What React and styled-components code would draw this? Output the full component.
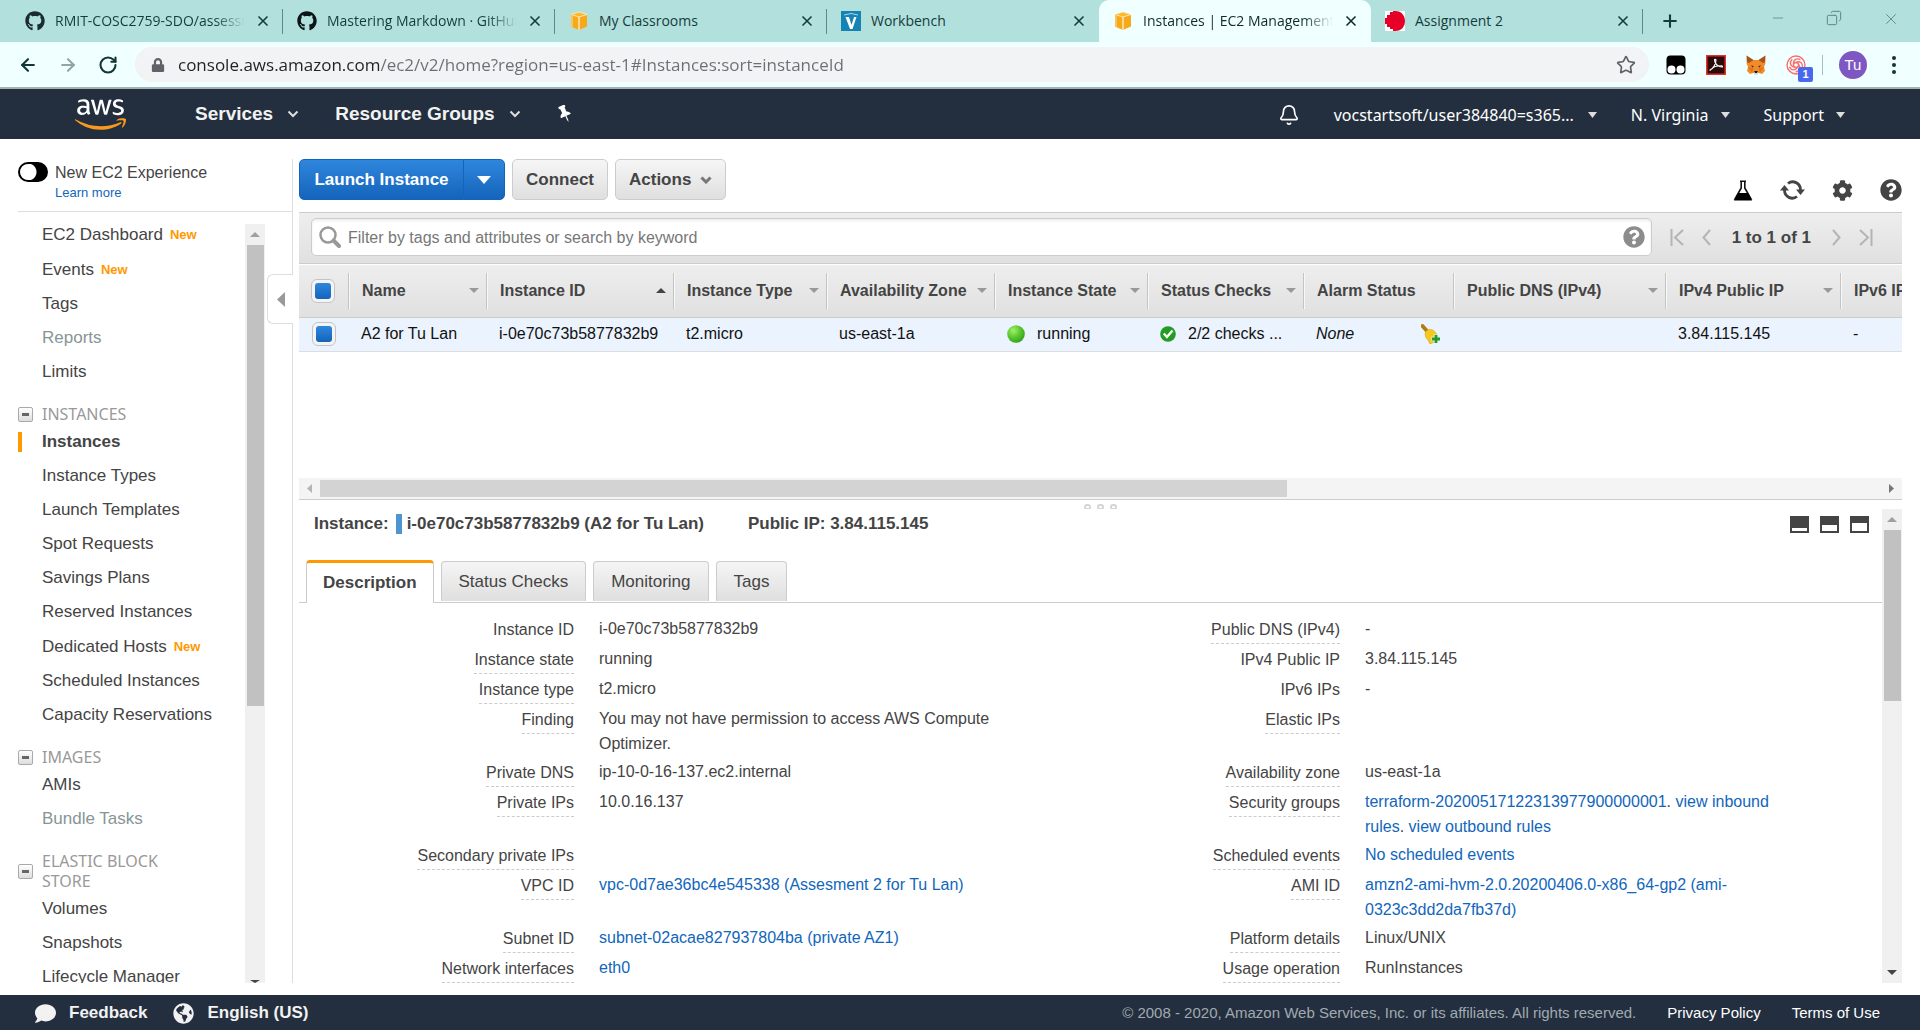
import React, { useState } from "react";
import styled, { createGlobalStyle, css } from "styled-components";
import { FaGithub, FaAws, FaLock, FaQuestionCircle, FaCog, FaComment, FaGlobeAmericas } from "react-icons/fa";
import { X, Plus, Minus, Copy, ArrowLeft, ArrowRight, RotateCw, Star, Bell } from "lucide-react";

const sans = '"Liberation Sans", Arial, sans-serif';
const humanist = '"Noto Sans", Tahoma, sans-serif';
const chromeFont = '"Open Sans", "Segoe UI", sans-serif';

const c = {
  strip: "#b2e0dd",
  bar: "#f0ffff",
  navy: "#232f3e",
  text: "#444444",
  link: "#1166bb",
  muted: "#879596",
  orange: "#ff9900",
  line: "#cccccc",
  pale: "#dddddd",
};

const Global = createGlobalStyle`
  * { box-sizing: border-box; }
  body { margin: 0; background: #fff; color: ${c.text}; font: 16px/20px ${sans}; }
  button { font: inherit; color: inherit; background: none; border: 0; padding: 0; cursor: pointer; }
  a { color: ${c.link}; text-decoration: none; }
  svg { display: block; flex: none; }
`;

const Page = styled.div`
  height: 100vh;
  display: flex;
  flex-direction: column;
  overflow: hidden;
`;

/* Browser frame */
const TabStrip = styled.div`
  display: flex;
  flex: none;
  height: 42px;
  padding-left: 11px;
  background: ${c.strip};
  font: 14px/20px ${chromeFont};
  color: #143c3c;
`;
const BrowserTab = styled.div`
  display: flex;
  align-items: center;
  flex: 0 1 272px;
  min-width: 0;
  padding: 0 12px 0 14px;
  gap: 10px;
  border-radius: ${(p) => (p.$active ? "10px 10px 0 0" : "0")};
  background: ${(p) => (p.$active ? c.bar : "transparent")};
  color: ${(p) => (p.$active ? "#102a2a" : "inherit")};
`;
const TabTitle = styled.button`
  flex: 1;
  min-width: 0;
  overflow: hidden;
  white-space: nowrap;
  text-align: left;
  ${(p) => p.$fade && css`mask-image: linear-gradient(to right, #000 calc(100% - 30px), transparent);`}
`;
const TabDivider = styled.span`
  width: 1px;
  height: 25px;
  margin-top: 9px;
  margin-left: -1px;
  background: #5c8a88;
`;
const NewTab = styled.button`
  width: 54px;
  display: grid;
  place-items: center;
`;
const WindowButtons = styled.div`
  display: flex;
  gap: 40px;
  margin-left: auto;
  padding: 10px 20px 0 0;
  color: #5f8583;
`;
const AddressBar = styled.div`
  display: flex;
  align-items: center;
  flex: none;
  height: 47px;
  padding: 0 19px 0 18px;
  gap: 20px;
  background: ${c.bar};
  border-bottom: 2px solid #a3b3b3;
  color: #123636;
`;
const Omnibox = styled.label`
  display: flex;
  align-items: center;
  flex: 1;
  height: 35px;
  margin: 0 -3px;
  padding: 0 13px 0 16px;
  gap: 13px;
  border-radius: 18px;
  background: #f1f3f4;
  color: #5f6368;
`;
const UrlInput = styled.input`
  flex: 1;
  min-width: 0;
  padding: 0;
  border: 0;
  outline: 0;
  font: 17px/24px ${chromeFont};
  color: #6b6f73;
  background: linear-gradient(to right, #202124 202px, #6b6f73 202px);
  background-clip: text;
  -webkit-text-fill-color: transparent;
`;
const Extensions = styled.div`
  display: flex;
  align-items: center;
  gap: 20px;
`;
const ExtensionButton = styled.button`
  position: relative;
`;
const ExtBadge = styled.span`
  position: absolute;
  left: 12px;
  top: 12px;
  width: 15px;
  height: 15px;
  border-radius: 2px;
  background: #4a68ee;
  color: #fff;
  font: bold 11px/15px ${sans};
`;
const ToolbarRule = styled.span`
  width: 1px;
  height: 20px;
  margin: 0 -4px;
  background: #a9bcbc;
`;
const Avatar = styled.button`
  width: 28px;
  height: 28px;
  border-radius: 50%;
  background: #7e57c2;
  color: #fff;
  font: 15px/28px ${sans};
`;

/* AWS navigation */
const Nav = styled.header`
  display: flex;
  align-items: center;
  flex: none;
  height: 50px;
  padding: 0 75px;
  background: ${c.navy};
  color: #fff;
`;
const AwsLogo = styled(FaAws)`
  width: 51px;
  height: 41px;
  fill: url(#aws-fill);
`;
const NavMain = styled.div`
  display: flex;
  align-items: center;
  gap: 36px;
  margin-left: 69px;
  font: bold 19px/24px ${sans};
  color: #f2f2f2;
`;
const NavSide = styled.div`
  display: flex;
  align-items: center;
  gap: 34px;
  margin-left: auto;
  padding-top: 2px;
  font: 16px/20px ${humanist};
`;
const NavButton = styled.button`
  display: flex;
  align-items: center;
  gap: ${(p) => p.$gap || 14}px;
  white-space: nowrap;
`;

/* Content */
const Body = styled.div`
  display: flex;
  flex: 1;
  min-height: 0;
  gap: 6px;
  padding: 20px 18px 12px 0;
`;
const Sidebar = styled.aside`
  position: relative;
  display: flex;
  flex-direction: column;
  flex: 0 0 293px;
  border-right: 1px solid ${c.pale};
`;
const Experience = styled.div`
  display: flex;
  flex: none;
  height: 53px;
  margin-left: 18px;
  padding-top: 3px;
  gap: 7px;
  border-bottom: 1px solid ${c.pale};
`;
const Toggle = styled.input`
  appearance: none;
  flex: none;
  width: 30px;
  height: 20px;
  margin: 0;
  border-radius: 10px;
  border: 2px solid #000;
  background: radial-gradient(circle at 8px 8px, #fff 8px, #000 9px);
`;
const ExperienceText = styled.div`
  display: flex;
  flex-direction: column;
  padding-top: 1px;
  font-size: 16px;
  a { font-size: 13px; line-height: 20px; }
`;
const SideScroll = styled.div`
  display: flex;
  flex: 1;
  min-height: 0;
`;
const SideNav = styled.nav`
  flex: 1;
  min-width: 0;
  padding: 5px 0 0 18px;
  overflow: hidden;
`;
const GroupTitle = styled.h3`
  display: flex;
  align-items: center;
  gap: 9px;
  max-width: 170px;
  margin: 15px 0 1px;
  font: 16px/20px ${humanist};
  color: #999;
`;
const CollapseButton = styled.button`
  display: grid;
  place-items: center;
  flex: none;
  width: 15px;
  height: 15px;
  border: 1px solid #aaa;
  border-radius: 2px;
  background: linear-gradient(#fff, #ddd);
  &::after { content: ""; width: 7px; height: 3px; background: #666; }
`;
const List = styled.ul`
  list-style: none;
  margin: 0;
  padding: 0;
`;
const SideItem = styled.li`
  display: flex;
  align-items: center;
  height: ${(p) => (p.$isNew ? 35 : 34)}px;
  font-size: 17px;
  a {
    padding-left: ${(p) => (p.$active ? 20 : 24)}px;
    border-left: ${(p) => (p.$active ? `4px solid ${c.orange}` : "0")};
    color: ${(p) => (p.$muted ? c.muted : c.text)};
    font-weight: ${(p) => (p.$active ? "bold" : "normal")};
  }
`;
const NewBadge = styled.span`
  margin-left: 7px;
  font: bold 13px/20px ${sans};
  color: ${c.orange};
`;
const SideHandle = styled.button`
  position: absolute;
  right: -1px;
  top: 115px;
  width: 26px;
  height: 50px;
  display: grid;
  place-items: center;
  border: 1px solid ${c.pale};
  border-right: 0;
  border-radius: 6px 0 0 6px;
  background: #fff;
`;

/* Scroll bars */
const Bar = styled.div`
  display: flex;
  flex-direction: ${(p) => (p.$horizontal ? "row" : "column")};
  align-items: center;
  justify-content: space-between;
  flex: none;
  ${(p) => (p.$horizontal ? "height: 21px;" : "width: 20px;")}
  margin: ${(p) => p.$margin || "0"};
  background: ${(p) => (p.$horizontal ? "#f4f4f4" : "#f0f0f0")};
`;
const BarEnd = styled.span`
  display: grid;
  place-items: center;
  flex: none;
  width: 21px;
  height: 21px;
`;
const Thumb = styled.span`
  flex: 0 0 auto;
  ${(p) => (p.$horizontal ? css`height: 17px; width: ${p.$size};` : css`width: 17px; height: ${p.$size};`)}
  background: ${(p) => (p.$horizontal ? "#d3d3d3" : "#c1c1c1")};
  margin-${(p) => (p.$horizontal ? "right" : "bottom")}: auto;
`;

const Main = styled.main`
  display: flex;
  flex-direction: column;
  flex: 1;
  min-width: 0;
`;
const Actions = styled.div`
  display: flex;
  flex: none;
  gap: 7px;
  height: 53px;
`;
const plainButton = css`
  border: 1px solid ${c.line};
  background: linear-gradient(#f6f6f6, #dfdfdf);
  color: ${c.text};
`;
const Button = styled.button`
  display: flex;
  align-items: center;
  height: 41px;
  gap: 9px;
  padding: 0 13px;
  border-radius: 5px;
  font: bold 17px/20px ${sans};
  ${plainButton}
`;
const Split = styled.div`
  display: flex;
  height: 41px;
`;
const Primary = styled(Button)`
  justify-content: center;
  padding: 0;
  min-width: ${(p) => (p.$arrow ? 42 : 165)}px;
  border: 1px solid #1166bb;
  border-radius: ${(p) => (p.$arrow ? "0 5px 5px 0" : "5px 0 0 5px")};
  margin-left: ${(p) => (p.$arrow ? -1 : 0)}px;
  background: linear-gradient(#2f86dd, #1464ba);
  color: #fff;
`;
const IconRow = styled.div`
  display: flex;
  align-items: center;
  gap: 27px;
  height: 22px;
  margin: 20px 0 0 auto;
  color: ${c.text};
`;
const FilterBar = styled.div`
  display: flex;
  align-items: center;
  flex: none;
  height: 52px;
  padding: 0 29px 2px 12px;
  gap: 18px;
  border: solid ${c.line};
  border-width: 1px 0;
  background: linear-gradient(#eeeeee, #e0e0e0);
`;
const FilterBox = styled.label`
  display: flex;
  align-items: center;
  flex: 1;
  height: 38px;
  padding: 0 6px 0 7px;
  gap: 7px;
  border: 1px solid ${c.line};
  border-radius: 5px;
  background: #fff;
  box-shadow: inset 0 2px 3px #eee;
  color: #999;
`;
const FilterInput = styled.input`
  flex: 1;
  min-width: 0;
  padding: 2px 0 0;
  border: 0;
  outline: 0;
  background: none;
  font: 16px/24px ${sans};
  color: ${c.text};
  &::placeholder { color: #777; opacity: 1; }
`;
const Pager = styled.div`
  display: flex;
  align-items: center;
  gap: 18px;
  font: bold 17px/20px ${sans};
  span { padding: 1px 3px 0; }
`;
const TablePane = styled.section`
  display: flex;
  flex-direction: column;
  flex: none;
  height: 236px;
  padding-top: 1px;
  border-bottom: 1px solid ${c.line};
`;
const TableClip = styled.div`
  flex: 1;
  min-height: 0;
  overflow: hidden;
`;
const Table = styled.table`
  width: 2600px;
  table-layout: fixed;
  border-collapse: collapse;
  white-space: nowrap;
`;
const HeadCell = styled.th`
  height: 52px;
  padding: 0;
  text-align: left;
  font: bold 16px/20px ${sans};
  border-bottom: 1px solid ${c.line};
  background: linear-gradient(#eeeeee, #e0e0e0);
`;
const HeadInner = styled.div`
  display: flex;
  align-items: center;
  justify-content: space-between;
  height: 36px;
  padding: 0 7px 0 ${(p) => (p.$plain ? 12 : 13)}px;
  border-left: ${(p) => (p.$plain ? "0" : "1px solid #c4c4c4")};
  box-shadow: ${(p) => (p.$plain ? "none" : "inset 1px 0 #f8f8f8")};
`;
const Cell = styled.td`
  height: 34px;
  padding: 0 6px 0 13px;
  color: #111;
  background: #eaf3fe;
  border-bottom: 1px solid ${c.pale};
  font-style: ${(p) => (p.$italic ? "italic" : "normal")};
`;
const CellFlex = styled.span`
  display: flex;
  align-items: center;
  gap: 12px;
  justify-content: ${(p) => (p.$apart ? "space-between" : "flex-start")};
  padding-right: ${(p) => (p.$apart ? 6 : 0)}px;
`;
const Check = styled.input`
  appearance: none;
  display: block;
  width: 24px;
  height: 24px;
  margin: 0;
  padding: 3px;
  border: 1px solid #c4c4c4;
  border-radius: 6px;
  background: #f4f4f4;
  &:checked::before {
    content: "";
    display: block;
    height: 16px;
    border-radius: 3px;
    background: linear-gradient(#2f86dd, #1464ba);
  }
`;

/* Details */
const Splitter = styled.div`
  display: flex;
  align-items: flex-end;
  justify-content: center;
  flex: none;
  gap: 6px;
  height: 9px;
`;
const Dot = styled.span`
  width: 7px;
  height: 5px;
  border: 2px solid #d5d5d5;
  border-bottom-width: 1px;
  border-radius: 3px 3px 1px 1px;
`;
const DetailPane = styled.section`
  display: flex;
  flex: 1;
  min-height: 0;
`;
const DetailContent = styled.div`
  flex: 1;
  min-width: 0;
  overflow: hidden;
`;
const DetailTitle = styled.h2`
  display: flex;
  align-items: center;
  height: 30px;
  margin: 0;
  padding: 0 13px 0 15px;
  font: bold 17px/20px ${sans};
`;
const Marker = styled.span`
  width: 6px;
  height: 20px;
  margin: 0 5px 0 7px;
  background: #4f94d2;
`;
const PublicIp = styled.span`
  margin-left: 44px;
`;
const Layouts = styled.span`
  display: flex;
  gap: 11px;
  margin-left: auto;
`;
const LayoutButton = styled.button`
  width: 19px;
  height: 17px;
  padding: 2px;
  border: 0;
  display: flex;
  align-items: flex-end;
  background: #444;
  &::after { content: ""; width: 100%; height: ${(p) => p.$open}px; background: #fff; }
`;
const Tabs = styled.div`
  display: flex;
  align-items: flex-end;
  gap: 7px;
  margin-top: 21px;
  padding-left: 7px;
  border-bottom: 1px solid ${c.line};
`;
const DetailTab = styled.button`
  height: ${(p) => (p.$active ? 43 : 40)}px;
  padding: 0 ${(p) => (p.$active ? 16 : 17)}px;
  border: 1px solid ${c.line};
  border-bottom: 0;
  border-radius: 4px 4px 0 0;
  font: 17px/20px ${sans};
  background: linear-gradient(#f5f5f5, #dfdfdf);
  margin-bottom: 1px;
  ${(p) => p.$active && css`
    border-top: 3px solid ${c.orange};
    background: #fff;
    font-weight: bold;
    margin-bottom: -1px;
  `}
`;
const Facts = styled.dl`
  display: grid;
  grid-template-columns: 275fr 491fr 275fr 491fr;
  margin: 0;
  padding: 13px 51px 0 0;
`;
const Fact = styled.dt`
  display: flex;
  justify-content: flex-end;
  align-items: flex-start;
  height: 30px;
  span {
    line-height: 27px;
    white-space: nowrap;
    border-bottom: 1px dashed ${(p) => (p.$plain ? "transparent" : c.line)};
  }
`;
const Value = styled.dd`
  margin: 0;
  padding: 0 36px 3px 25px;
  line-height: 25px;
`;

/* Footer */
const Footer = styled.footer`
  display: flex;
  align-items: center;
  flex: none;
  height: 35px;
  padding: 1px 40px 0 35px;
  background: ${c.navy};
  color: #fff;
`;
const FooterButton = styled.button`
  display: flex;
  align-items: center;
  gap: 13px;
  margin-right: 26px;
  font: bold 17px/20px ${sans};
  color: #f2f2f2;
`;
const Legal = styled.div`
  display: flex;
  gap: 31px;
  margin-left: auto;
  font-size: 15px;
  color: #a2a9b1;
  a { color: #fff; }
`;

/* Drawings */
const Tri = ({ dir = "down", w = 9, h = 6, fill = "#999" }) => {
  const pts = {
    down: "0,0 10,0 5,10",
    up: "0,10 10,10 5,0",
    left: "10,0 10,10 0,5",
    right: "0,0 0,10 10,5",
  };
  return (
    <svg width={w} height={h} viewBox="0 0 10 10" preserveAspectRatio="none" aria-hidden="true">
      <polygon points={pts[dir]} fill={fill} />
    </svg>
  );
};
const Chevron = ({ stroke = "#ddd", width = 2 }) => (
  <svg width="12" height="8" viewBox="0 0 12 8" fill="none" stroke={stroke} strokeWidth={width} aria-hidden="true">
    <path d="M1.500 1.500 6 6 10.500 1.500" />
  </svg>
);
const Cube = () => (
  <svg width="20" height="20" viewBox="0 0 20 20" aria-hidden="true">
    <path d="M10 1 18 3.500v12L10 19 2 15.500v-12z" fill="#f7a81b" />
    <path d="M10 1 18 3.500 10 6 2 3.500z" fill="#fbb829" stroke="#fff3cf" strokeWidth=".8" />
    <path d="M10 6v13" stroke="#ffe9b5" strokeWidth="1.500" />
    <path d="M2 3.500v12L4 16.500V4z" fill="#f9c45c" />
  </svg>
);
const Vocareum = () => (
  <svg width="20" height="20" viewBox="0 0 20 20" aria-hidden="true">
    <rect width="20" height="20" fill="#1583b5" />
    <path d="M3 4 10 2.500 17 4" fill="none" stroke="#a8d5e8" />
    <path d="M4.500 6H8l2.500 8L13 6h2.500L11.500 18h-2.500z" fill="#fff" />
  </svg>
);
const Rmit = () => (
  <svg width="20" height="20" viewBox="0 0 20 20" aria-hidden="true">
    <rect width="20" height="20" fill="#fff" />
    <path d="M10 0c7 0 10 5 10 10s-3 10-10 10H8v-2H5v-2H2v-3H0V7h2V4h3V1h3V0z" fill="#e60028" />
  </svg>
);
const Tampermonkey = () => (
  <svg width="20" height="20" viewBox="0 0 20 20" aria-hidden="true">
    <rect x=".5" y=".5" width="19" height="19" rx="4" fill="#000" />
    <circle cx="5.500" cy="14.500" r="4" fill="#fff" />
    <circle cx="14.500" cy="14.500" r="4" fill="#fff" />
  </svg>
);
const Acrobat = () => (
  <svg width="20" height="20" viewBox="0 0 20 20" aria-hidden="true">
    <rect x=".75" y=".75" width="18.500" height="18.500" fill="#2c0b0b" stroke="#e5332a" strokeWidth="1.500" />
    <path d="M4 15c3-1 6-6 6-10 0-1-1.500-1-1.500 0 0 4 4 7 7.500 7 1 0 .5-1.200-.5-1.200C12 10.800 7 12 5 14.500c-.6.7-1 .8-1 .5z" fill="none" stroke="#fff" strokeWidth="1.100" />
  </svg>
);
const Fox = () => (
  <svg width="20" height="20" viewBox="0 0 20 20" aria-hidden="true">
    <path d="M1 1l6 4h6l6-4 .5 7L18 12l1 4-3 3-3-1H7l-3 1-3-3 1-4L.5 8z" fill="#f28b2a" />
    <path d="M.5 .5 7.500 5 3 8 1 7zM19.500 .5 12.500 5 17 8l2-1z" fill="#a8531d" />
    <path d="M2 12l5.500 1L6 18zM18 12l-5.500 1L14 18z" fill="#e2761b" />
    <path d="M5 10 8 11.500 6.500 12.500zM15 10 12 11.500l1.500 1z" fill="#333" />
    <path d="M8 17h4v2.500H8z" fill="#d9cfc8" />
    <path d="M8.200 16h3.600L11 18H9z" fill="#1a1a1a" />
  </svg>
);
const Swirl = () => (
  <svg width="20" height="20" viewBox="0 0 20 20" fill="none" stroke="#ff6b6b" strokeWidth="1.400" aria-hidden="true">
    <circle cx="10" cy="10" r="9" />
    {[0, 72, 144, 216, 288].map((a) => (
      <path key={a} transform={`rotate(${a} 10 10)`} d="M10 7.500C14 5.500 17 8 16.500 12.500" />
    ))}
    <circle cx="10" cy="10" r="2.500" />
  </svg>
);
const Flask = () => (
  <svg width="20" height="21" viewBox="0 0 20 21" aria-hidden="true">
    <path d="M7 1.200h6M8.200 1v7L2 19h16L11.800 8V1" fill="none" stroke="#111" strokeWidth="1.600" />
    <path d="M5 13h10l4 7.500H1z" fill="#000" />
  </svg>
);
const Refresh = () => (
  <svg width="25" height="22" viewBox="0 0 25 22" aria-hidden="true">
    <g fill="none" stroke="#444" strokeWidth="2.800">
      <path d="M8 4.500C13 .5 20.500 4 20.500 11" />
      <path d="M17 17.500C12 21.500 4.500 18 4.500 11" />
    </g>
    <path d="M16 10.500h9L20.500 16zM0 11.500h9L4.500 6z" fill="#444" />
  </svg>
);
const PageArrow = ({ flip, end }) => (
  <svg width={end ? 14 : 9} height="17" viewBox={end ? "0 0 14 17" : "0 0 9 17"} fill="none" stroke="#b4b4b4" strokeWidth="2" aria-hidden="true">
    {end && !flip && <path d="M1.500 0v17M13 1 5 8.500 13 16" />}
    {end && flip && <path d="M12.500 0v17M1 1 9 8.500 1 16" />}
    {!end && (flip ? <path d="M1 1 7.500 8.500 1 16" /> : <path d="M8 1 1.500 8.500 8 16" />)}
  </svg>
);
const Magnifier = () => (
  <svg width="22" height="22" viewBox="0 0 22 22" fill="none" stroke="#999" aria-hidden="true">
    <circle cx="9" cy="9" r="7.500" strokeWidth="2.500" />
    <path d="M14.500 14.500 20 20" strokeWidth="4" strokeLinecap="round" />
  </svg>
);
const Pin = () => (
  <svg width="16" height="18" viewBox="0 0 16 18" fill="#fff" aria-hidden="true">
    <g transform="rotate(-24 8 9)">
      <path d="M4.500 0h7v2l-1.200 1v4.200C12.500 8 13.500 9.500 13.500 11.300h-11C2.500 9.500 3.500 8 5.700 7.200V3L4.500 2z" />
      <path d="M7.400 11h1.200v4L8 18l-.6-3z" />
    </g>
  </svg>
);
const Ball = () => (
  <svg width="18" height="18" viewBox="0 0 18 18" aria-hidden="true">
    <defs>
      <radialGradient id="ball" cx=".35" cy=".3" r=".8">
        <stop offset="0" stopColor="#a6ee6a" />
        <stop offset=".5" stopColor="#58c82e" />
        <stop offset="1" stopColor="#2f9a1c" />
      </radialGradient>
    </defs>
    <circle cx="9" cy="9" r="8.800" fill="url(#ball)" />
  </svg>
);
const Passed = () => (
  <svg width="16" height="16" viewBox="0 0 16 16" aria-hidden="true">
    <circle cx="8" cy="8" r="7.800" fill="#239b24" />
    <path d="M3.800 7.500 7 11l5.500-6.500" fill="none" stroke="#fff" strokeWidth="2.400" />
  </svg>
);
const AlarmAdd = () => (
  <svg width="20" height="20" viewBox="0 0 20 20" aria-hidden="true">
    <path d="M1.500 2 6 7" stroke="#b57a12" strokeWidth="3.800" strokeLinecap="round" />
    <path d="M4.500 8c3-4.500 9-3 11.500 3l2.500 4.500L9 20l-2-4c-2.500-2-3.500-5-2.500-8z" fill="#f6c81c" stroke="#d9a514" strokeWidth=".6" />
    <path d="M15 10.500v9M10.500 15h9" stroke="#eaf3fe" strokeWidth="4.400" />
    <path d="M15 11v8M11 15h8" stroke="#259a2c" strokeWidth="2.800" />
  </svg>
);

/* Data */
const browserTabs = [
  { title: "RMIT-COSC2759-SDO/assessment", icon: <FaGithub size={20} color="#1b2b33" />, fade: true },
  { title: "Mastering Markdown · GitHub Guides", icon: <FaGithub size={20} color="#0b1416" />, fade: true },
  { title: "My Classrooms", icon: <Cube /> },
  { title: "Workbench", icon: <Vocareum />, next: true },
  { title: "Instances | EC2 Management Console", icon: <Cube />, fade: true, active: true },
  { title: "Assignment 2", icon: <Rmit /> },
];
const sideGroups = [
  { items: [["EC2 Dashboard", "new"], ["Events", "new"], ["Tags"], ["Reports", "muted"], ["Limits"]] },
  {
    title: "INSTANCES",
    items: [["Instances", "active"], ["Instance Types"], ["Launch Templates"], ["Spot Requests"], ["Savings Plans"],
      ["Reserved Instances"], ["Dedicated Hosts", "new"], ["Scheduled Instances"], ["Capacity Reservations"]],
  },
  { title: "IMAGES", items: [["AMIs"], ["Bundle Tasks", "muted"]] },
  { title: "ELASTIC BLOCK STORE", items: [["Volumes"], ["Snapshots"], ["Lifecycle Manager"]] },
];
const columns = [
  { label: "Name", width: 138, sort: "down" },
  { label: "Instance ID", width: 187, sort: "up" },
  { label: "Instance Type", width: 153, sort: "down" },
  { label: "Availability Zone", width: 168, sort: "down" },
  { label: "Instance State", width: 153, sort: "down" },
  { label: "Status Checks", width: 156, sort: "down" },
  { label: "Alarm Status", width: 150 },
  { label: "Public DNS (IPv4)", width: 212, sort: "down" },
  { label: "IPv4 Public IP", width: 175, sort: "down" },
  { label: "IPv6 IPs" },
];
const link = (t) => <a href="#detail">{t}</a>;
const facts = [
  ["Instance ID", "i-0e70c73b5877832b9", true],
  ["Public DNS (IPv4)", "-"],
  ["Instance state", "running"],
  ["IPv4 Public IP", "3.84.115.145", true],
  ["Instance type", "t2.micro"],
  ["IPv6 IPs", "-", true],
  ["Finding", "You may not have permission to access AWS Compute Optimizer."],
  ["Elastic IPs", ""],
  ["Private DNS", "ip-10-0-16-137.ec2.internal"],
  ["Availability zone", "us-east-1a"],
  ["Private IPs", "10.0.16.137"],
  ["Security groups", <>{link("terraform-20200517122313977900000001")}. {link("view inbound rules")}. {link("view outbound rules")}</>],
  ["Secondary private IPs", ""],
  ["Scheduled events", link("No scheduled events")],
  ["VPC ID", link("vpc-0d7ae36bc4e545338 (Assesment 2 for Tu Lan)")],
  ["AMI ID", link("amzn2-ami-hvm-2.0.20200406.0-x86_64-gp2 (ami-0323c3dd2da7fb37d)")],
  ["Subnet ID", link("subnet-02acae827937804ba (private AZ1)")],
  ["Platform details", "Linux/UNIX"],
  ["Network interfaces", link("eth0")],
  ["Usage operation", "RunInstances"],
];

function BrowserFrame() {
  return (
    <>
      <TabStrip>
        {browserTabs.map((t) => (
          <React.Fragment key={t.title}>
            <BrowserTab $active={t.active}>
              {t.icon}
              <TabTitle $fade={t.fade}>{t.title}</TabTitle>
              <button aria-label="Close tab"><X size={16} strokeWidth={2.5} /></button>
            </BrowserTab>
            {!t.active && !t.next && <TabDivider />}
          </React.Fragment>
        ))}
        <NewTab aria-label="New tab"><Plus size={20} strokeWidth={2.5} /></NewTab>
        <WindowButtons>
          <Minus size={16} strokeWidth={1.2} />
          <Copy size={16} strokeWidth={1.5} transform="scale(-1 1)" />
          <X size={18} strokeWidth={1.2} />
        </WindowButtons>
      </TabStrip>
      <AddressBar>
        <button aria-label="Back"><ArrowLeft size={20} strokeWidth={2.5} /></button>
        <button aria-label="Forward"><ArrowRight size={20} strokeWidth={2.5} color="#8fa6a6" /></button>
        <button aria-label="Reload"><RotateCw size={20} strokeWidth={2.5} /></button>
        <Omnibox>
          <FaLock size={14} />
          <UrlInput aria-label="Address" defaultValue="console.aws.amazon.com/ec2/v2/home?region=us-east-1#Instances:sort=instanceId" />
          <Star size={20} strokeWidth={2} />
        </Omnibox>
        <Extensions>
          <ExtensionButton aria-label="Tampermonkey"><Tampermonkey /></ExtensionButton>
          <ExtensionButton aria-label="Acrobat"><Acrobat /></ExtensionButton>
          <ExtensionButton aria-label="MetaMask"><Fox /></ExtensionButton>
          <ExtensionButton aria-label="Extension"><Swirl /><ExtBadge>1</ExtBadge></ExtensionButton>
          <ToolbarRule />
          <Avatar>Tu</Avatar>
          <button aria-label="Menu">
            <svg width="14" height="20" viewBox="0 0 14 20" fill="#123636">
              <circle cx="7" cy="3" r="2" /><circle cx="7" cy="10" r="2" /><circle cx="7" cy="17" r="2" />
            </svg>
          </button>
        </Extensions>
      </AddressBar>
    </>
  );
}

function ConsoleNav() {
  return (
    <Nav>
      <svg width="0" height="0" aria-hidden="true">
        <linearGradient id="aws-fill" gradientUnits="userSpaceOnUse" x1="0" y1="0" x2="0" y2="512">
          <stop offset=".59" stopColor="#fff" />
          <stop offset=".59" stopColor="#f79a1e" />
        </linearGradient>
      </svg>
      <a href="#home" aria-label="AWS"><AwsLogo /></a>
      <NavMain>
        <NavButton>Services <Chevron /></NavButton>
        <NavButton>Resource Groups <Chevron /></NavButton>
        <NavButton aria-label="Pin"><Pin /></NavButton>
      </NavMain>
      <NavSide>
        <NavButton aria-label="Notifications"><Bell size={22} strokeWidth={1.8} /></NavButton>
        <NavButton>vocstartsoft/user384840=s365... <Tri fill="#ddd" /></NavButton>
        <NavButton $gap={12}>N. Virginia <Tri fill="#ddd" /></NavButton>
        <NavButton $gap={12}>Support <Tri fill="#ddd" /></NavButton>
      </NavSide>
    </Nav>
  );
}

function SideBar() {
  return (
    <Sidebar>
      <Experience>
        <Toggle type="checkbox" id="experience" />
        <ExperienceText>
          <label htmlFor="experience">New EC2 Experience</label>
          <a href="#learn">Learn more</a>
        </ExperienceText>
      </Experience>
      <SideScroll>
        <SideNav>
          {sideGroups.map((g, i) => (
            <section key={i}>
              {g.title && <GroupTitle><CollapseButton aria-label={"Collapse " + g.title} />{g.title}</GroupTitle>}
              <List>
                {g.items.map(([name, kind]) => (
                  <SideItem key={name} $isNew={kind === "new"} $muted={kind === "muted"} $active={kind === "active"}>
                    <a href="#nav">{name}</a>
                    {kind === "new" && <NewBadge>New</NewBadge>}
                  </SideItem>
                ))}
              </List>
            </section>
          ))}
        </SideNav>
        <Bar $margin="12px 27px 0 0" aria-hidden="true">
          <BarEnd><Tri dir="up" w={10} h={5} fill="#a0a0a0" /></BarEnd>
          <Thumb $size="461px" />
          <Tri w={10} h={3} fill="#444" />
        </Bar>
      </SideScroll>
      <SideHandle aria-label="Hide navigation"><Tri dir="left" w={8} h={15} /></SideHandle>
    </Sidebar>
  );
}

function InstanceTable() {
  const [picked, setPicked] = useState(true);
  const toggle = () => setPicked(!picked);
  return (
    <TablePane>
      <TableClip>
        <Table>
          <colgroup>
            <col style={{ width: 49 }} />
            {columns.map((col) => <col key={col.label} style={{ width: col.width }} />)}
          </colgroup>
          <thead>
            <tr>
              <HeadCell><HeadInner $plain><Check type="checkbox" aria-label="Select all" checked={picked} onChange={toggle} /></HeadInner></HeadCell>
              {columns.map((col) => (
                <HeadCell key={col.label}>
                  <HeadInner>
                    {col.label}
                    {col.sort && <Tri dir={col.sort} w={10} h={5} fill={col.sort === "up" ? "#444" : "#999"} />}
                  </HeadInner>
                </HeadCell>
              ))}
            </tr>
          </thead>
          <tbody>
            <tr>
              <Cell><Check type="checkbox" aria-label="Select A2 for Tu Lan" checked={picked} onChange={toggle} /></Cell>
              <Cell>A2 for Tu Lan</Cell>
              <Cell>i-0e70c73b5877832b9</Cell>
              <Cell>t2.micro</Cell>
              <Cell>us-east-1a</Cell>
              <Cell><CellFlex><Ball />running</CellFlex></Cell>
              <Cell><CellFlex><Passed />2/2 checks ...</CellFlex></Cell>
              <Cell $italic><CellFlex $apart>None <AlarmAdd /></CellFlex></Cell>
              <Cell />
              <Cell>3.84.115.145</Cell>
              <Cell>-</Cell>
            </tr>
          </tbody>
        </Table>
      </TableClip>
      <Bar $horizontal aria-hidden="true">
        <BarEnd><Tri dir="left" w={5} h={9} fill="#b5b5b5" /></BarEnd>
        <Thumb $horizontal $size="967px" />
        <BarEnd><Tri dir="right" w={5} h={9} fill="#777" /></BarEnd>
      </Bar>
    </TablePane>
  );
}

function Details() {
  return (
    <>
      <Splitter><Dot /><Dot /><Dot /></Splitter>
      <DetailPane>
        <DetailContent>
          <DetailTitle>
            Instance:<Marker />i-0e70c73b5877832b9 (A2 for Tu Lan)
            <PublicIp>Public IP: 3.84.115.145</PublicIp>
            <Layouts>
              <LayoutButton aria-label="Small pane" $open={3} />
              <LayoutButton aria-label="Half pane" $open={6} />
              <LayoutButton aria-label="Full pane" $open={8} />
            </Layouts>
          </DetailTitle>
          <Tabs role="tablist">
            <DetailTab role="tab" $active aria-selected="true">Description</DetailTab>
            <DetailTab role="tab">Status Checks</DetailTab>
            <DetailTab role="tab">Monitoring</DetailTab>
            <DetailTab role="tab">Tags</DetailTab>
          </Tabs>
          <Facts>
            {facts.map(([label, value, plain]) => (
              <React.Fragment key={label}>
                <Fact $plain={plain}><span>{label}</span></Fact>
                <Value>{value}</Value>
              </React.Fragment>
            ))}
          </Facts>
        </DetailContent>
        <Bar aria-hidden="true">
          <BarEnd><Tri dir="up" w={10} h={5} fill="#a0a0a0" /></BarEnd>
          <Thumb $size="171px" />
          <BarEnd><Tri w={10} h={5} fill="#444" /></BarEnd>
        </Bar>
      </DetailPane>
    </>
  );
}

export default function App() {
  return (
    <Page>
      <Global />
      <BrowserFrame />
      <ConsoleNav />
      <Body>
        <SideBar />
        <Main>
          <Actions>
            <Split>
              <Primary>Launch Instance</Primary>
              <Primary $arrow aria-label="More launch options"><Tri w={14} h={8} fill="#fff" /></Primary>
            </Split>
            <Button>Connect</Button>
            <Button>Actions <Chevron stroke="#777" width={3} /></Button>
            <IconRow>
              <button aria-label="Labs"><Flask /></button>
              <button aria-label="Refresh"><Refresh /></button>
              <button aria-label="Settings"><FaCog size={21} /></button>
              <button aria-label="Help"><FaQuestionCircle size={22} /></button>
            </IconRow>
          </Actions>
          <FilterBar>
            <FilterBox>
              <Magnifier />
              <FilterInput aria-label="Filter" placeholder="Filter by tags and attributes or search by keyword" />
              <FaQuestionCircle size={22} color="#8c8c8c" />
            </FilterBox>
            <Pager>
              <button aria-label="First page"><PageArrow end /></button>
              <button aria-label="Previous page"><PageArrow /></button>
              <span>1 to 1 of 1</span>
              <button aria-label="Next page"><PageArrow flip /></button>
              <button aria-label="Last page"><PageArrow end flip /></button>
            </Pager>
          </FilterBar>
          <InstanceTable />
          <Details />
        </Main>
      </Body>
      <Footer>
        <FooterButton><FaComment size={21} />Feedback</FooterButton>
        <FooterButton><FaGlobeAmericas size={21} />English (US)</FooterButton>
        <Legal>
          <span>© 2008 - 2020, Amazon Web Services, Inc. or its affiliates. All rights reserved.</span>
          <a href="#privacy">Privacy Policy</a>
          <a href="#terms">Terms of Use</a>
        </Legal>
      </Footer>
    </Page>
  );
}
